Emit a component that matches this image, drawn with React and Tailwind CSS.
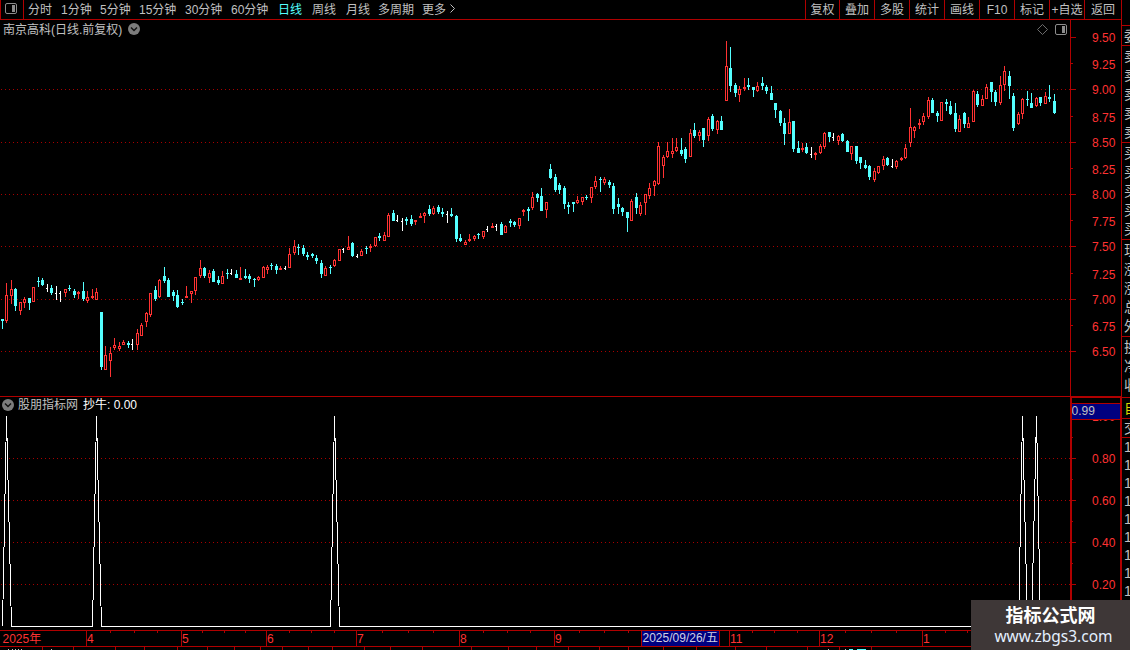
import React from "react";

const RED = "#ff3232";
const CYAN = "#54ffff";
const LINE = "#b00000";

// x, high, body top, body bottom, low, kind (r = up, c = down, w = flat)
const candles = [
  [2, 319, 319, 321, 329, "c"], [6, 283, 295, 321, 323, "r"], [11, 280, 289, 296, 304, "r"],
  [15, 288, 289, 306, 311, "c"], [20, 302, 302, 311, 315, "r"], [24, 297, 299, 303, 308, "r"],
  [29, 298, 298, 303, 310, "c"], [33, 287, 287, 302, 302, "r"], [38, 277, 281, 282, 287, "c"],
  [42, 278, 280, 285, 286, "c"], [47, 284, 288, 289, 292, "w"], [51, 285, 288, 293, 295, "c"],
  [56, 286, 293, 294, 300, "w"], [60, 291, 293, 294, 302, "w"], [65, 289, 289, 293, 297, "r"],
  [69, 285, 288, 289, 291, "c"], [74, 289, 291, 295, 298, "c"], [78, 291, 292, 294, 299, "r"],
  [83, 282, 291, 299, 301, "c"], [87, 291, 297, 301, 303, "r"], [92, 289, 296, 298, 299, "r"],
  [96, 288, 292, 300, 300, "r"], [101, 312, 312, 367, 370, "c"], [105, 346, 355, 370, 370, "r"],
  [110, 347, 353, 361, 377, "r"], [114, 338, 345, 348, 350, "r"], [119, 342, 346, 349, 351, "r"],
  [123, 340, 342, 345, 345, "r"], [128, 341, 343, 345, 348, "c"], [132, 339, 344, 345, 350, "w"],
  [137, 329, 333, 345, 350, "r"], [141, 323, 325, 336, 336, "r"], [146, 312, 313, 322, 327, "r"],
  [150, 293, 293, 315, 317, "r"], [155, 286, 290, 299, 301, "c"], [159, 279, 280, 297, 298, "r"],
  [164, 267, 276, 281, 283, "c"], [168, 278, 280, 297, 297, "c"], [173, 290, 292, 296, 301, "c"],
  [177, 290, 295, 307, 308, "c"], [182, 299, 302, 303, 305, "c"], [186, 286, 296, 298, 298, "r"],
  [191, 291, 291, 294, 303, "r"], [195, 277, 277, 291, 295, "r"], [200, 260, 268, 276, 278, "r"],
  [204, 267, 268, 276, 278, "c"], [209, 270, 273, 278, 283, "r"], [213, 269, 271, 282, 282, "c"],
  [218, 276, 280, 283, 285, "c"], [222, 271, 276, 284, 284, "r"], [227, 269, 273, 274, 279, "c"],
  [231, 269, 273, 274, 275, "w"], [236, 270, 274, 278, 278, "c"], [240, 267, 278, 280, 280, "r"],
  [245, 269, 276, 278, 279, "c"], [249, 274, 276, 279, 283, "c"], [254, 278, 279, 280, 287, "c"],
  [258, 276, 277, 280, 281, "r"], [263, 266, 267, 278, 278, "r"], [267, 265, 267, 270, 274, "r"],
  [271, 263, 265, 266, 270, "c"], [276, 264, 266, 270, 274, "c"], [280, 266, 268, 270, 270, "r"],
  [285, 266, 268, 269, 270, "w"], [289, 248, 254, 268, 268, "r"], [294, 240, 246, 253, 255, "r"],
  [298, 244, 247, 248, 255, "c"], [303, 245, 248, 254, 256, "c"], [307, 252, 255, 257, 260, "c"],
  [312, 253, 254, 256, 258, "c"], [316, 255, 258, 261, 264, "c"], [321, 260, 263, 274, 278, "c"],
  [325, 266, 268, 276, 276, "r"], [330, 265, 267, 268, 274, "c"], [334, 259, 260, 266, 267, "r"],
  [339, 249, 249, 261, 261, "r"], [343, 248, 249, 250, 253, "w"], [348, 236, 247, 250, 250, "r"],
  [352, 242, 243, 256, 257, "c"], [357, 254, 256, 257, 258, "w"], [361, 249, 251, 256, 256, "r"],
  [366, 246, 248, 249, 254, "c"], [370, 244, 246, 248, 252, "r"], [375, 237, 237, 246, 247, "r"],
  [379, 233, 236, 238, 241, "c"], [384, 232, 235, 241, 241, "r"], [388, 213, 215, 237, 237, "r"],
  [393, 210, 213, 221, 221, "c"], [397, 215, 220, 221, 222, "w"], [402, 218, 221, 222, 231, "w"],
  [406, 217, 219, 221, 225, "c"], [411, 215, 219, 224, 226, "c"], [415, 220, 220, 222, 225, "r"],
  [420, 213, 216, 218, 218, "r"], [424, 212, 213, 216, 223, "r"], [429, 205, 209, 214, 216, "c"],
  [433, 206, 208, 214, 215, "r"], [438, 205, 207, 212, 214, "c"], [442, 208, 212, 214, 217, "c"],
  [447, 211, 214, 215, 223, "w"], [451, 208, 214, 216, 217, "c"], [456, 215, 216, 239, 242, "c"],
  [460, 234, 238, 241, 242, "c"], [465, 240, 242, 245, 245, "r"], [469, 234, 239, 241, 242, "r"],
  [474, 235, 236, 239, 241, "r"], [478, 233, 234, 235, 239, "c"], [483, 231, 231, 237, 239, "r"],
  [487, 226, 229, 230, 232, "w"], [492, 223, 226, 228, 228, "r"], [496, 224, 226, 227, 231, "w"],
  [501, 222, 224, 235, 235, "c"], [505, 225, 226, 233, 233, "r"], [510, 219, 221, 223, 227, "c"],
  [514, 221, 222, 225, 227, "c"], [519, 218, 218, 226, 229, "r"], [523, 209, 210, 212, 216, "r"],
  [528, 207, 209, 211, 221, "c"], [532, 192, 197, 208, 210, "r"], [537, 193, 194, 198, 202, "c"],
  [541, 188, 196, 211, 211, "c"], [546, 202, 202, 210, 218, "r"], [550, 164, 169, 178, 179, "c"],
  [555, 174, 177, 190, 192, "c"], [559, 183, 185, 190, 194, "c"], [564, 186, 188, 204, 209, "c"],
  [568, 202, 205, 207, 214, "c"], [573, 202, 202, 204, 212, "c"], [577, 196, 200, 203, 204, "r"],
  [582, 197, 197, 202, 205, "r"], [586, 195, 197, 198, 200, "c"], [591, 187, 187, 198, 203, "r"],
  [595, 176, 181, 187, 189, "r"], [600, 177, 179, 180, 192, "c"], [604, 177, 179, 183, 185, "r"],
  [609, 180, 182, 185, 188, "c"], [613, 183, 186, 209, 214, "c"], [618, 198, 204, 207, 214, "c"],
  [622, 207, 208, 212, 216, "c"], [627, 212, 212, 218, 232, "c"], [631, 199, 201, 221, 221, "r"],
  [636, 193, 197, 208, 214, "c"], [640, 202, 205, 214, 216, "r"], [645, 194, 194, 203, 215, "r"],
  [649, 183, 188, 196, 199, "r"], [654, 180, 181, 186, 196, "r"], [658, 142, 146, 184, 185, "r"],
  [663, 155, 157, 166, 178, "r"], [667, 142, 151, 157, 158, "r"], [672, 138, 151, 154, 158, "r"],
  [676, 138, 147, 151, 152, "r"], [681, 138, 150, 154, 156, "c"], [685, 147, 149, 159, 163, "c"],
  [690, 129, 133, 157, 157, "r"], [694, 123, 130, 136, 138, "c"], [699, 130, 132, 136, 141, "r"],
  [703, 128, 128, 140, 147, "c"], [708, 117, 119, 136, 141, "r"], [712, 114, 116, 129, 131, "c"],
  [717, 120, 121, 130, 134, "r"], [721, 116, 121, 130, 130, "c"], [726, 41, 66, 101, 101, "r"],
  [730, 47, 68, 86, 92, "c"], [735, 83, 85, 93, 97, "c"], [739, 86, 89, 95, 102, "r"],
  [744, 78, 87, 89, 91, "r"], [748, 78, 85, 87, 90, "c"], [753, 87, 87, 90, 97, "c"],
  [757, 82, 86, 91, 92, "r"], [762, 77, 83, 86, 90, "c"], [766, 85, 87, 91, 94, "c"],
  [771, 86, 93, 100, 100, "c"], [775, 103, 103, 110, 118, "c"], [780, 110, 111, 123, 126, "c"],
  [784, 118, 123, 134, 145, "c"], [789, 109, 122, 134, 134, "r"], [793, 121, 121, 149, 152, "c"],
  [798, 141, 148, 153, 153, "c"], [802, 143, 148, 150, 152, "r"], [806, 143, 147, 153, 154, "c"],
  [811, 147, 154, 155, 158, "w"], [815, 152, 153, 155, 160, "r"], [820, 144, 146, 153, 154, "r"],
  [824, 132, 133, 147, 149, "r"], [829, 132, 132, 137, 142, "c"], [833, 133, 137, 138, 141, "w"],
  [838, 135, 136, 141, 145, "r"], [842, 133, 134, 141, 142, "c"], [847, 140, 141, 152, 152, "c"],
  [851, 146, 146, 154, 160, "r"], [856, 146, 146, 161, 164, "c"], [860, 157, 157, 163, 169, "c"],
  [865, 160, 165, 168, 169, "c"], [869, 165, 166, 177, 180, "c"], [874, 168, 171, 180, 182, "r"],
  [878, 166, 166, 173, 174, "r"], [883, 156, 159, 166, 170, "r"], [887, 157, 158, 165, 166, "c"],
  [892, 159, 166, 167, 168, "w"], [896, 160, 161, 167, 169, "r"], [901, 157, 158, 160, 161, "r"],
  [905, 144, 148, 158, 159, "r"], [910, 108, 127, 143, 147, "r"], [914, 126, 127, 131, 138, "r"],
  [919, 119, 123, 125, 129, "r"], [923, 113, 116, 122, 125, "r"], [928, 97, 100, 117, 119, "r"],
  [932, 98, 100, 113, 113, "c"], [937, 111, 113, 116, 122, "c"], [941, 102, 102, 121, 121, "r"],
  [946, 99, 102, 104, 111, "c"], [950, 101, 106, 114, 115, "c"], [955, 103, 113, 129, 132, "c"],
  [959, 115, 119, 132, 132, "r"], [964, 112, 113, 124, 128, "c"], [968, 117, 123, 128, 128, "r"],
  [973, 90, 91, 122, 122, "r"], [977, 91, 94, 105, 107, "c"], [982, 95, 99, 106, 106, "r"],
  [986, 84, 87, 99, 99, "r"], [991, 82, 82, 92, 102, "c"], [995, 90, 92, 102, 106, "c"],
  [1000, 76, 85, 103, 105, "r"], [1004, 66, 71, 85, 91, "r"], [1009, 71, 76, 86, 99, "c"],
  [1013, 93, 96, 128, 131, "c"], [1018, 112, 114, 124, 125, "r"], [1022, 98, 99, 114, 119, "r"],
  [1027, 91, 99, 100, 106, "c"], [1031, 93, 103, 108, 108, "c"], [1036, 97, 98, 106, 107, "r"],
  [1040, 97, 97, 103, 106, "c"], [1045, 92, 96, 104, 104, "r"], [1049, 85, 97, 99, 102, "c"],
  [1054, 94, 101, 113, 114, "c"],
];

const priceTicks = [
  ["9.50", 37], ["9.25", 63], ["9.00", 89], ["8.75", 116], ["8.50", 142],
  ["8.25", 168], ["8.00", 194], ["7.75", 220], ["7.50", 246], ["7.25", 273],
  ["7.00", 299], ["6.75", 325], ["6.50", 351],
];

const indicatorTicks = [["0.80", 458], ["0.60", 500], ["0.40", 542], ["0.20", 584]];

const months = [
  ["4", 86], ["5", 181], ["6", 266], ["7", 356], ["8", 459],
  ["9", 554], ["11", 729], ["12", 819], ["1", 922],
];
const weekTicks = [
  110, 134, 157, 202, 224, 245, 289, 311, 334, 382, 408, 433, 483, 507, 530,
  579, 604, 628, 752, 774, 797, 845, 871, 896, 945, 967,
];
const footTicks = [
  42, 73, 115, 144, 177, 207, 234, 260, 282, 308, 332, 364, 390, 422, 471,
  508, 536, 568, 599, 628, 663, 696, 735, 766, 807, 839, 871,
];

const periods = [
  ["分时", "w-[33px]"], ["1分钟", "w-[39px]"], ["5分钟", "w-[39px]"], ["15分钟", "w-[46px]"],
  ["30分钟", "w-[46px]"], ["60分钟", "w-[47px]"], ["日线", "w-[34px] text-[#54ffff]"],
  ["周线", "w-[34px]"], ["月线", "w-[32px]"], ["多周期", "w-[44px]"], ["更多", "w-[27px]"],
];
const tools = ["复权", "叠加", "多股", "统计", "画线", "F10", "标记", "+自选", "返回"];

const Candle = ({ data }) => {
  const [x, high, top, bottom, low, kind] = data;
  if (kind === "w") {
    return (
      <g fill="#fff">
        <rect x={x} y={high} width="1" height={low - high} />
        <rect x={x - 1} y={top} width="1" height="1" />
      </g>
    );
  }
  const color = kind === "r" ? RED : CYAN;
  return (
    <g fill={color}>
      <rect x={x} y={high} width="1" height={low - high} />
      <rect x={x - 1} y={top} width="3" height={bottom - top} />
      {kind === "r" && bottom - top > 2 && (
        <rect x={x} y={top + 1} width="1" height={bottom - top - 2} fill="#000" />
      )}
    </g>
  );
};

const GridLine = ({ y }) => (
  <line x1="1" x2="1070" y1={y + 0.5} y2={y + 0.5} stroke="#a80000" strokeDasharray="1 3" />
);

const DropIcon = () => (
  <svg width="12" height="12" viewBox="0 0 12 12" className="shrink-0">
    <circle cx="6" cy="6" r="6" fill="#7c7c7c" />
    <path d="M3 4.6 L6 7.6 L9 4.6" fill="none" stroke="#111" strokeWidth="1.4" />
  </svg>
);

const PanelIcon = () => (
  <svg width="12" height="11" viewBox="0 0 12 11" className="shrink-0">
    <rect x="0.5" y="0.5" width="11" height="10" rx="1.5" fill="none" stroke="#8c8c8c" />
    <rect x="7" y="2" width="3" height="7" fill="#8c8c8c" />
  </svg>
);

const Toolbar = () => (
  <div className="flex h-5 border-b border-[#b00000] text-[#c0c0c0]">
    <div className="flex w-6 items-center border-x border-[#b00000] pb-0.5 pl-1">
      <PanelIcon />
    </div>
    <div className="flex flex-1 items-center pl-1">
      {periods.map(([name, cls]) => (
        <span key={name} className={`shrink-0 whitespace-nowrap ${cls}`}>{name}</span>
      ))}
      <svg width="7" height="9" viewBox="0 0 7 9" className="-mt-0.5">
        <path d="M1.5 0.5 L5.5 4.5 L1.5 8.5" fill="none" stroke="#c0c0c0" />
      </svg>
    </div>
    <div className="flex">
      {tools.map((name) => (
        <div
          key={name}
          className="flex w-[35px] items-center justify-center whitespace-nowrap border-l border-[#b00000] last:w-[37px] first:w-[34px]"
        >
          {name}
        </div>
      ))}
    </div>
  </div>
);

const PricePanel = () => (
  <div className="grid h-[376px] grid-cols-[1070px_51px]">
    <div className="relative">
      <svg width="1070" height="376" viewBox="0 20 1070 376" shapeRendering="crispEdges">
        {[89, 142, 194, 246, 299, 351].map((y) => <GridLine key={y} y={y} />)}
        {candles.map((c) => <Candle key={c[0]} data={c} />)}
      </svg>
      <div className="absolute inset-x-0 top-0 flex h-[18px] items-center pl-[3px] pr-[3px] text-[#c0c0c0]">
        <span className="pt-0.5">南京高科(日线.前复权)</span>
        <span className="ml-1.5"><DropIcon /></span>
        <svg width="11" height="11" viewBox="0 0 11 11" className="ml-auto mr-[7px]">
          <path d="M5.5 0.5 L10.5 5.5 L5.5 10.5 L0.5 5.5 Z" fill="none" stroke="#777" strokeWidth="0.9" />
        </svg>
        <PanelIcon />
      </div>
    </div>
    <svg width="51" height="376" viewBox="1070 20 51 376">
      <rect x="1070" y="20" width="1" height="376" fill={LINE} />
      {priceTicks.map(([label, y], i) => (
        <g key={label}>
          <rect x="1071" y={y} width={i % 2 ? 2 : 5} height="1" fill={LINE} />
          <text x="1092" y={y + (i % 2 ? 6 : 5)} fill={RED}>{label}</text>
        </g>
      ))}
    </svg>
  </div>
);

const IndicatorPanel = () => (
  <div className="grid h-[234px] grid-cols-[1070px_51px]">
    <div className="relative">
      <svg width="1070" height="234" viewBox="0 396 1070 234" shapeRendering="crispEdges">
        <rect x="0" y="396" width="1070" height="1" fill={LINE} />
        {indicatorTicks.map(([, y]) => <GridLine key={y} y={y} />)}
        <polyline
          fill="none"
          stroke="#fff"
          points="2.5,626.5 6.5,416 11.5,626.5 92.5,626.5 96.5,416 101.5,626.5 330.5,626.5 334.5,416 339.5,626.5 1018.5,626.5 1022.5,416 1027.5,626.5 1031.5,626.5 1036.5,416 1040.5,626.5 1070,626.5"
        />
      </svg>
      <div className="absolute left-0.5 top-0 flex h-[18px] items-center">
        <DropIcon />
        <span className="ml-1 text-[#c0c0c0]">股朋指标网</span>
        <span className="ml-[5px] text-white">抄牛: 0.00</span>
      </div>
    </div>
    <svg width="51" height="234" viewBox="1070 396 51 234">
      <text x="1092" y="421" fill={RED}>1.00</text>
      <rect x="1071" y="403" width="50" height="17" fill={LINE} />
      <rect x="1071" y="404" width="49" height="15" fill="#000080" />
      <text x="1071.5" y="415" fill="#c0c0c0">0.99</text>
      {[437, 479, 521, 563, 605].map((y) => (
        <rect key={y} x="1072" y={y} width="1" height="1" fill={LINE} />
      ))}
      {indicatorTicks.map(([label, y]) => (
        <g key={label}>
          <rect x="1072" y={y} width="4" height="1" fill={LINE} />
          <text x="1092" y={y + 5} fill={RED}>{label}</text>
        </g>
      ))}
      <path d="M1070 396 H1121 V398 H1072 V630 H1070 Z" fill={LINE} />
      <rect x="1120" y="396" width="1" height="234" fill={LINE} />
    </svg>
  </div>
);

const Timeline = () => (
  <svg width="1121" height="20" viewBox="0 630 1121 20">
    <rect x="0" y="630" width="1121" height="1" fill={LINE} />
    <rect x="0" y="646" width="1121" height="1" fill={LINE} />
    <text x="2.5" y="643" fill={RED}>2025年</text>
    {months.map(([label, x]) => (
      <g key={label}>
        <rect x={x} y="631" width="1" height="15" fill={LINE} />
        <text x={x + 1} y="643" fill={RED}>{label}</text>
      </g>
    ))}
    {weekTicks.map((x) => <rect key={x} x={x} y="631" width="1" height="2" fill={LINE} />)}
    {footTicks.map((x) => <rect key={x} x={x} y="647" width="1" height="3" fill={LINE} />)}
    <rect x="641" y="631" width="79" height="15" fill={LINE} />
    <rect x="642" y="631" width="77" height="15" fill="#000080" />
    <text x="642.5" y="642" fill="#d0d0e0">2025/09/26/五</text>
    {/* tops of the ticker row below */}
    {[8, 12, 15, 18, 21, 51, 828, 845].map((x) => (
      <rect key={x} x={x} y="649" width="1" height="1" fill="#c0c0c0" />
    ))}
    <rect x="849" y="649" width="4" height="1" fill={CYAN} />
    <rect x="857" y="649" width="9" height="1" fill={CYAN} />
  </svg>
);

// Quote panel, only its left edge is visible
const Row = ({ children, cls = "h-[19px]" }) => (
  <div className={`flex shrink-0 items-center ${cls}`}>
    <span className="shrink-0 whitespace-nowrap pl-0.5">{children}</span>
  </div>
);

const Divider = ({ cls = "mt-px" }) => (
  <div className={`h-px shrink-0 bg-[#b00000] ${cls}`} />
);

const QuoteStrip = () => (
  <div className="flex w-[9px] flex-col overflow-hidden border-l border-[#b00000] text-sm leading-none text-[#c0c0c0]">
    <div className="h-[26px] shrink-0 border-b border-[#b00000]" />
    <Row cls="h-5 border-b border-[#b00000]">委</Row>
    {[1, 2, 3, 4, 5].map((n) => <Row key={n}>卖</Row>)}
    <Divider />
    {[1, 2, 3, 4, 5].map((n) => <Row key={n}>买</Row>)}
    <Divider />
    <Row>现</Row>
    <Row>涨</Row>
    <Row>涨</Row>
    <Row>总</Row>
    <Row>外</Row>
    <Divider />
    <Row>换</Row>
    <Row>净</Row>
    <Row>收</Row>
    <Divider cls="mt-[3px]" />
    <Row cls="h-[21px] border-b border-[#b00000] text-[#d8d800]">自</Row>
    <Row cls="h-[19px] border-b border-[#b00000]">交</Row>
    {[1, 2, 3, 4, 5, 6, 7, 8, 9].map((n) => (
      <Row key={n} cls="h-[18px]">1</Row>
    ))}
  </div>
);

const App = () => {
  return (
    <div className="relative flex h-[650px] w-[1130px] overflow-hidden bg-black font-['Liberation_Sans','Noto_Sans_CJK_SC',sans-serif] text-xs leading-none">
      <div className="flex w-[1121px] flex-col">
        <Toolbar />
        <PricePanel />
        <IndicatorPanel />
        <Timeline />
      </div>
      <QuoteStrip />

      {/* Site badge */}
      <div className="absolute bottom-0 right-0 flex h-[50px] w-[159px] flex-col items-center bg-[#3e3737] pt-1.5 text-white">
        <span className="text-lg font-bold leading-5">指标公式网</span>
        <span className="pl-1.5 font-['Noto_Sans',sans-serif] text-[15.5px] leading-5 text-[#e4f0ff]">www.zbgs3.com</span>
      </div>
    </div>
  );
};

export default App;
